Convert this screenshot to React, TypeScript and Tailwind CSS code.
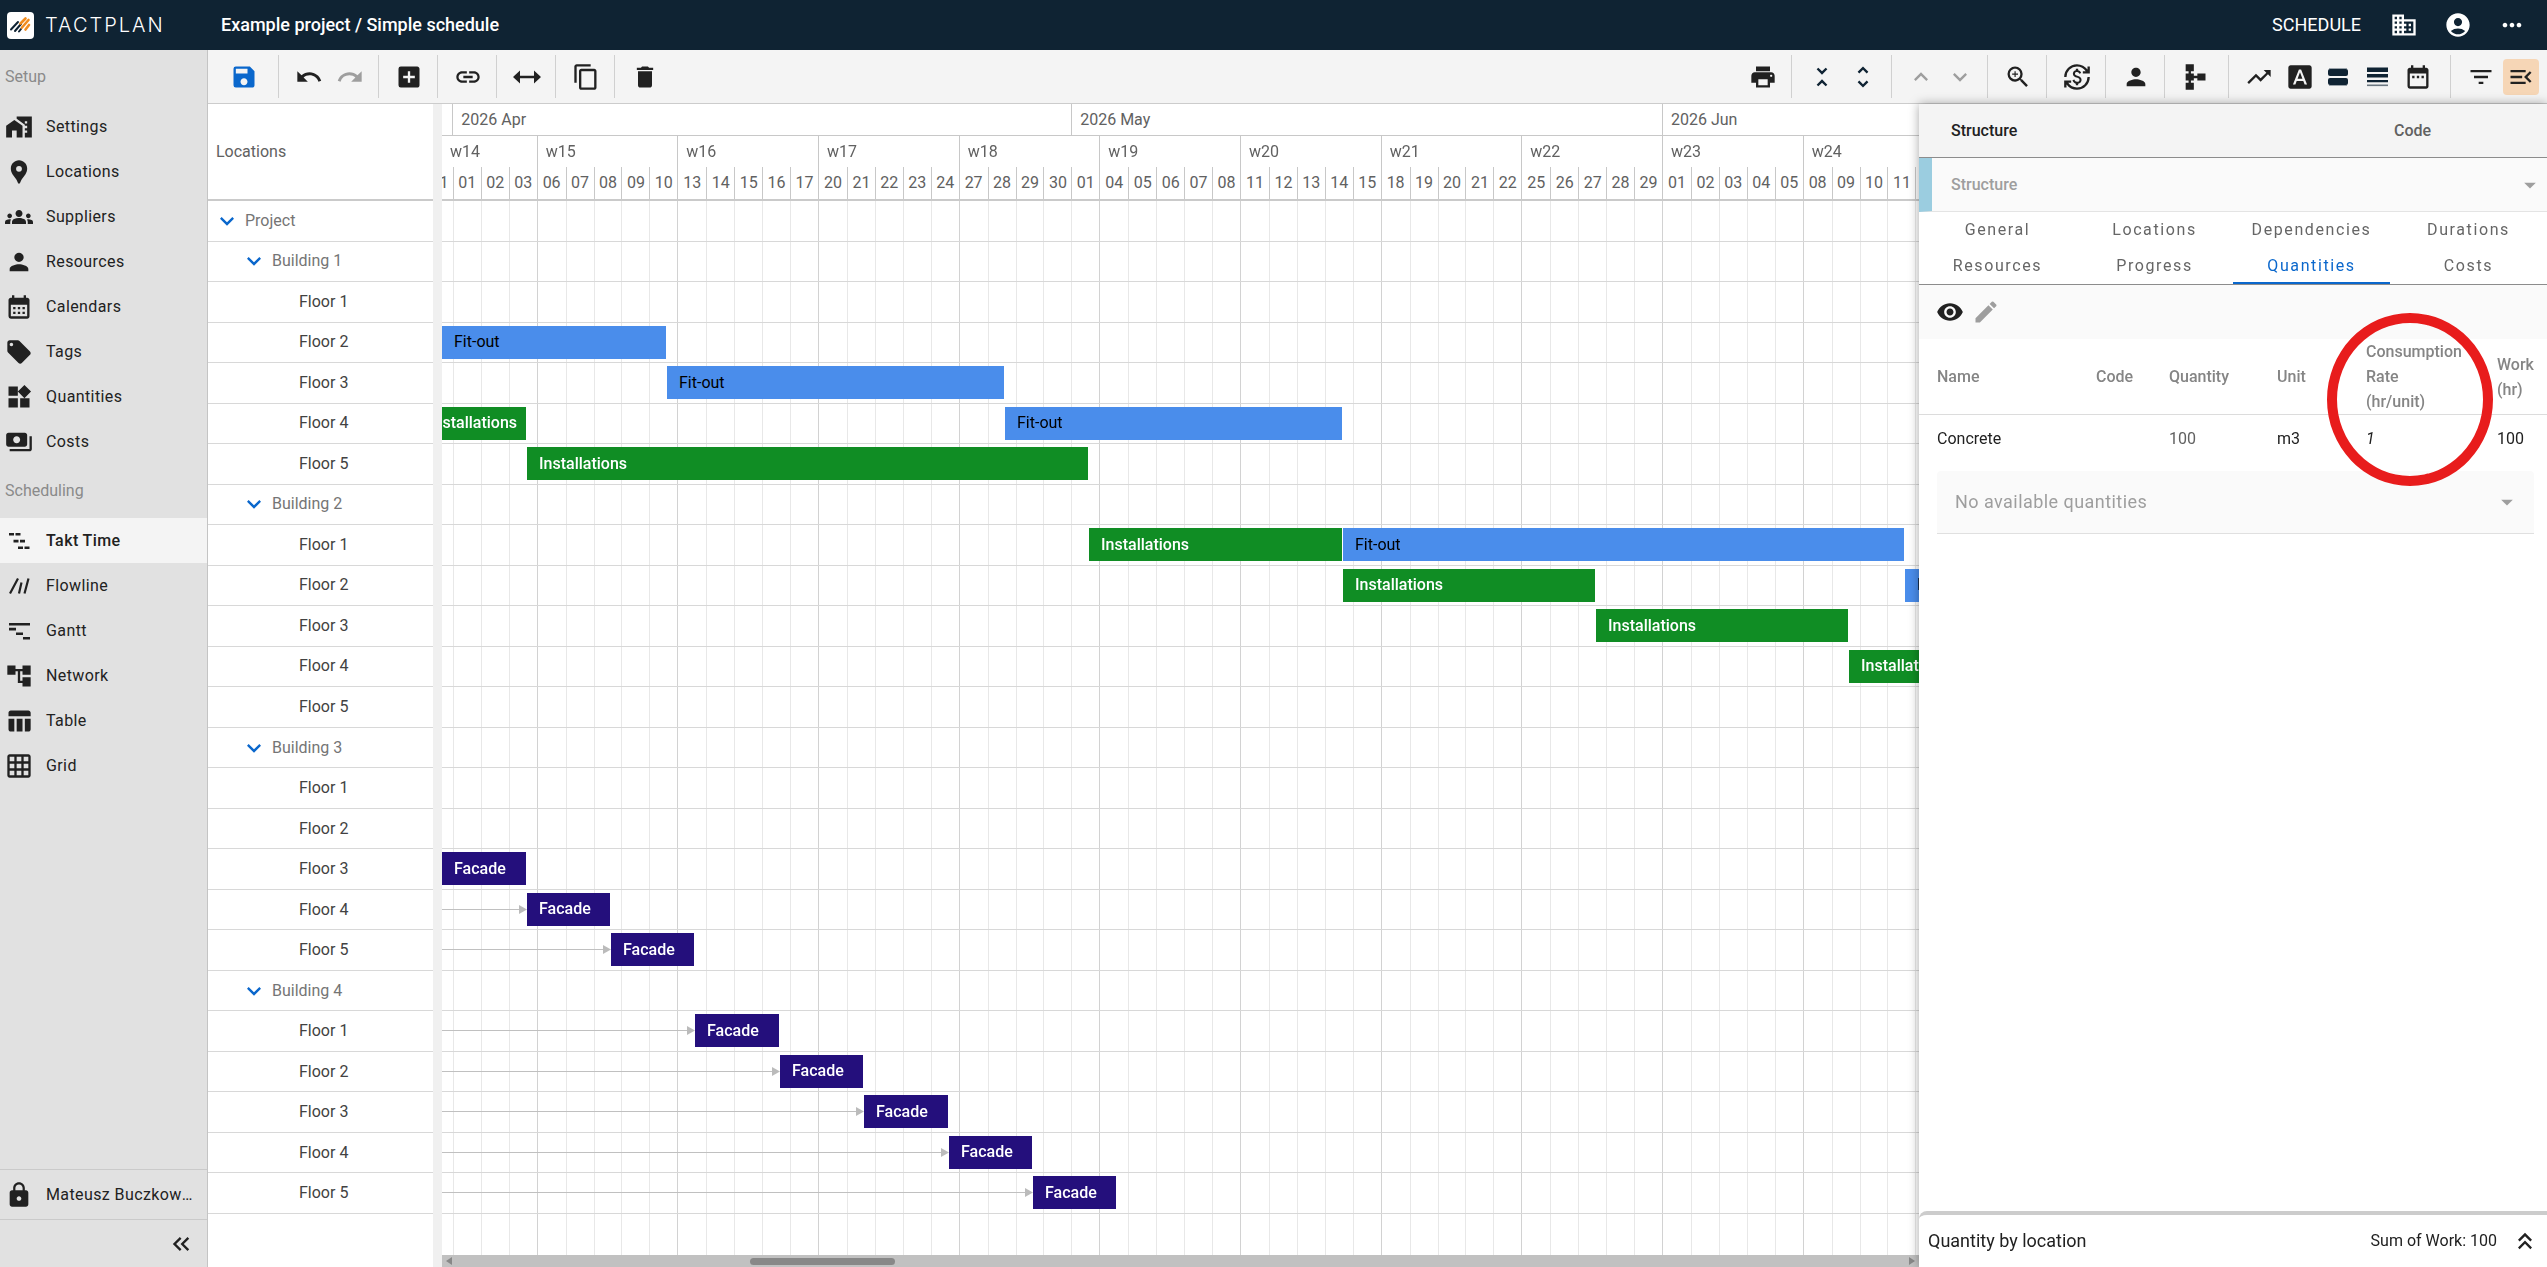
import React, { useLayoutEffect, useRef, useState } from "react";
import {
    MdAccountCircle,
    MdAccountTree,
    MdAddBox,
    MdArrowDropDown,
    MdBusiness,
    MdCalendarMonth,
    MdContentCopy,
    MdCurrencyExchange,
    MdDateRange,
    MdDelete,
    MdEdit,
    MdExpandLess,
    MdExpandMore,
    MdFilterList,
    MdFontDownload,
    MdGridOn,
    MdGroups,
    MdHomeWork,
    MdKeyboardDoubleArrowLeft,
    MdKeyboardDoubleArrowUp,
    MdLink,
    MdLocalOffer,
    MdLocationPin,
    MdLock,
    MdMenuOpen,
    MdMoreHoriz,
    MdPayments,
    MdPerson,
    MdPrint,
    MdRedo,
    MdSave,
    MdSchema,
    MdTableChart,
    MdTrendingUp,
    MdUndo,
    MdUnfoldLess,
    MdUnfoldMore,
    MdVisibility,
    MdWidgets,
    MdZoomIn,
} from "react-icons/md";

type Icon = React.ComponentType<{ className?: string }>;

/* ---------- custom icons ---------- */

const TaktIcon: Icon = ({ className }) => (
    <svg className={className} viewBox="0 0 28 28" fill="currentColor">
        <path d="M4 6h5v2.6H4zM10.5 6h5v2.6h-5zM8.5 12.8h5v2.6h-5zM15 12.8h5v2.6h-5zM13 19.4h5V22h-5zM19.5 19.4h5V22h-5z" />
    </svg>
);

const FlowlineIcon: Icon = ({ className }) => (
    <svg className={className} viewBox="0 0 28 28" fill="none" stroke="currentColor" strokeWidth="2.2">
        <path d="M5 21.5L13 6.5M14 21.5L16.5 10.5M19.5 21.5L23.5 6.5" />
    </svg>
);

const GanttIcon: Icon = ({ className }) => (
    <svg className={className} viewBox="0 0 28 28" fill="currentColor">
        <path d="M4 6h21v2.6H4zM4 10.8h7v2.6H4zM11 15.4h7V18h-7zM18 20h7v2.6h-7z" />
    </svg>
);

const StretchIcon: Icon = ({ className }) => (
    <svg className={className} viewBox="0 0 28 28" fill="currentColor">
        <path d="M0 14l7-6.5v5.2h14V7.5l7 6.5-7 6.5v-5.2H7v5.2z" />
    </svg>
);

const SplitRowsIcon: Icon = ({ className }) => (
    <svg className={className} viewBox="0 0 28 28">
        <path d="M5 5.5h18M5 22.500h18" stroke="#9aa3aa" />
        <rect x="4" y="6" width="20" height="7" rx="2" fill="#0f2333" />
        <rect x="4" y="15" width="20" height="7" rx="2" fill="#0f2333" />
    </svg>
);

const RowWeightIcon: Icon = ({ className }) => (
    <svg className={className} viewBox="0 0 28 28" fill="#0f2333">
        <path d="M4 4.5h21V9H4zM4 11h21v3.4H4zM4 17h21v2.2H4z" />
        <path d="M4 21.500h21v1.6H4z" opacity="0.6" />
    </svg>
);

const Logo = () => (
    <svg className="size-[27px]" viewBox="0 0 27 27" fill="none" strokeLinecap="round" strokeWidth="2">
        <rect width="27" height="27" rx="4" fill="#fff" />
        <path d="M4 17.5l7-7.500M8 19l6-7M12 19.500l2-2.500" stroke="#0f2333" />
        <path d="M13.500 11.500l5-5M15 15.500l6.500-7.500M18.500 17.500l3.500-4.500" stroke="#f08c1e" strokeWidth="2.600" />
    </svg>
);

/* ---------- data ---------- */

const setupItems: [string, Icon][] = [
    ["Settings", MdHomeWork],
    ["Locations", MdLocationPin],
    ["Suppliers", MdGroups],
    ["Resources", MdPerson],
    ["Calendars", MdCalendarMonth],
    ["Tags", MdLocalOffer],
    ["Quantities", MdWidgets],
    ["Costs", MdPayments],
];

const schedulingItems: [string, Icon][] = [
    ["Takt Time", TaktIcon],
    ["Flowline", FlowlineIcon],
    ["Gantt", GanttIcon],
    ["Network", MdAccountTree],
    ["Table", MdTableChart],
    ["Grid", MdGridOn],
];

const accountItems: [string, Icon][] = [
    ["Company", MdBusiness],
    ["Account", MdAccountCircle],
    ["More", MdMoreHoriz],
];

type Kind = "fitout" | "install" | "facade";

interface Bar {
    kind: Kind;
    start: number; // working days since the first visible Monday
    end: number;
    linked?: boolean;
}

interface Row {
    label: string;
    level: 0 | 1 | 2;
    bars: Bar[];
}

const barStyles: Record<Kind, { label: string; className: string }> = {
    fitout: { label: "Fit-out", className: "bg-[#4a8deb] text-black" },
    install: { label: "Installations", className: "bg-[#108d24] font-medium text-white" },
    facade: { label: "Facade", className: "bg-[#240f7c] font-medium text-white" },
};

const building = (n: number, floors: Bar[][]): Row[] => [
    { label: `Building ${n}`, level: 1, bars: [] },
    ...floors.map((bars, i): Row => ({ label: `Floor ${i + 1}`, level: 2, bars })),
];

const facade = (start: number): Bar[] => [{ kind: "facade", start, end: start + 3, linked: true }];

const rows: Row[] = [
    { label: "Project", level: 0, bars: [] },
    ...building(1, [
        [],
        [{ kind: "fitout", start: 2, end: 10 }],
        [{ kind: "fitout", start: 10, end: 22 }],
        [{ kind: "install", start: 1.1, end: 5 }, { kind: "fitout", start: 22, end: 34 }],
        [{ kind: "install", start: 5, end: 25 }],
    ]),
    ...building(2, [
        [{ kind: "install", start: 25, end: 34 }, { kind: "fitout", start: 34, end: 54 }],
        [{ kind: "install", start: 34, end: 43 }, { kind: "fitout", start: 54, end: 60 }],
        [{ kind: "install", start: 43, end: 52 }],
        [{ kind: "install", start: 52, end: 60 }],
        [],
    ]),
    ...building(3, [[], [], facade(2), facade(5), facade(8)]),
    ...building(4, [facade(11), facade(14), facade(17), facade(20), facade(23)]),
];

const WEEKS = 12;
const CANVAS_WIDTH = 1688;
const DAY_WIDTH = CANVAS_WIDTH / (WEEKS * 5);
const BAR_SHIFT = -10;

const weeks = Array.from({ length: WEEKS }, (_, w) => ({
    label: `w${14 + w}`,
    days: Array.from({ length: 5 }, (_, d) => {
        const date = new Date(Date.UTC(2026, 2, 30 + w * 7 + d));
        return String(date.getUTCDate()).padStart(2, "0");
    }),
}));

const months = [
    { label: "", days: 2 },
    { label: "2026 Apr", days: 22 },
    { label: "2026 May", days: 21 },
    { label: "2026 Jun", days: 15 },
];

const tabs = ["General", "Locations", "Dependencies", "Durations", "Resources", "Progress", "Quantities", "Costs"];

/* ---------- parts ---------- */

function Header() {
    return (
        <header className="flex h-[50px] shrink-0 items-center bg-[#0f2333] text-lg text-white">
            <a href="#home" className="flex w-[221px] items-center gap-[11px] pl-[7px]">
                <Logo />
                <span className="font-['Inter'] text-xl font-light tracking-widest">TACTPLAN</span>
            </a>
            <h1 className="flex-1 font-medium">Example project / Simple schedule</h1>
            <a href="#schedule" className="mr-4">SCHEDULE</a>
            <div className="flex pr-2">
                {accountItems.map(([name, Ico]) => (
                    <button key={name} type="button" aria-label={name} className="flex w-[54px] justify-center">
                        <Ico className="size-7" />
                    </button>
                ))}
            </div>
        </header>
    );
}

function NavList({ title, items, active }: { title: string; items: [string, Icon][]; active?: string }) {
    return (
        <section>
            <h2 className="flex h-[54px] items-center pl-[5px] text-[#8a8a8a]">{title}</h2>
            {items.map(([name, Ico]) => (
                <a
                    key={name}
                    href={`#${name}`}
                    className={`flex h-[45px] items-center gap-[13px] pl-[5px] tracking-wide ${name === active ? "bg-[#f4f4f4] font-medium" : ""}`}
                >
                    <Ico className="size-7 text-[#212121]" />
                    {name}
                </a>
            ))}
        </section>
    );
}

function Sidebar() {
    return (
        <nav className="flex w-52 shrink-0 flex-col border-r border-[#c4c4c4] bg-[#e1e1e1] text-[#212121]">
            <NavList title="Setup" items={setupItems} />
            <NavList title="Scheduling" items={schedulingItems} active="Takt Time" />
            <div className="mt-auto flex h-[50px] items-center gap-[13px] border-t border-[#cacaca] pr-3 pl-[5px] tracking-wide">
                <MdLock className="size-7 shrink-0" />
                <span className="truncate">Mateusz Buczkowski</span>
            </div>
            <div className="flex h-12 items-center justify-end border-t border-[#cacaca] pr-3">
                <button type="button" aria-label="Collapse menu">
                    <MdKeyboardDoubleArrowLeft className="size-7" />
                </button>
            </div>
        </nav>
    );
}

function Tool({ name, icon: Ico, className = "w-[41px]" }: { name: string; icon: Icon; className?: string }) {
    return (
        <button type="button" aria-label={name} className={`flex items-center justify-center ${className}`}>
            <Ico className="size-7" />
        </button>
    );
}

function ToolGroup({ children, className = "" }: { children: React.ReactNode; className?: string }) {
    return <div className={`flex h-[43px] border-r border-[#d0d0d0] pr-2 pl-[9px] ${className}`}>{children}</div>;
}

function Toolbar() {
    return (
        <div className="flex h-[54px] shrink-0 items-center border-b border-[#cccccc] bg-[#f4f4f4] pr-1.5 text-[#212121]">
            <ToolGroup className="w-[71px]">
                <Tool name="Save" icon={MdSave} className="w-[54px] text-[#0a67cc]" />
            </ToolGroup>
            <ToolGroup>
                <Tool name="Undo" icon={MdUndo} />
                <Tool name="Redo" icon={MdRedo} className="w-[41px] text-[#9e9e9e]" />
            </ToolGroup>
            <ToolGroup><Tool name="Add" icon={MdAddBox} /></ToolGroup>
            <ToolGroup><Tool name="Link" icon={MdLink} /></ToolGroup>
            <ToolGroup><Tool name="Stretch" icon={StretchIcon} /></ToolGroup>
            <ToolGroup><Tool name="Copy" icon={MdContentCopy} /></ToolGroup>
            <div className="pl-[9px]"><Tool name="Delete" icon={MdDelete} /></div>
            <ToolGroup className="ml-auto"><Tool name="Print" icon={MdPrint} /></ToolGroup>
            <ToolGroup className="text-[#0f2333]">
                <Tool name="Collapse rows" icon={MdUnfoldLess} />
                <Tool name="Expand rows" icon={MdUnfoldMore} />
            </ToolGroup>
            <ToolGroup className="w-24 text-[#9e9e9e]">
                <Tool name="Previous" icon={MdExpandLess} />
                <Tool name="Next" icon={MdExpandMore} />
            </ToolGroup>
            <ToolGroup><Tool name="Zoom" icon={MdZoomIn} /></ToolGroup>
            <ToolGroup><Tool name="Cost flow" icon={MdCurrencyExchange} /></ToolGroup>
            <ToolGroup><Tool name="Resource" icon={MdPerson} /></ToolGroup>
            <ToolGroup className="w-16"><Tool name="Dependencies" icon={MdSchema} /></ToolGroup>
            <ToolGroup className="w-[222px]">
                <Tool name="Progress line" icon={MdTrendingUp} />
                <Tool name="Labels" icon={MdFontDownload} />
                <Tool name="Split rows" icon={SplitRowsIcon} className="w-9" />
                <Tool name="Row height" icon={RowWeightIcon} />
                <Tool name="Date range" icon={MdDateRange} />
            </ToolGroup>
            <div className="flex items-center gap-0.5 pl-[9px]">
                <Tool name="Filter" icon={MdFilterList} />
                <Tool name="Details" icon={MdMenuOpen} className="mr-0.5 h-9 w-9 rounded bg-[#f6d6b6]" />
            </div>
        </div>
    );
}

function LocationTree() {
    return (
        <div className="flex w-[225px] shrink-0 flex-col">
            <div className="flex h-[97px] items-center border-b-2 border-[#cacaca] pl-2 text-[#616161]">Locations</div>
            <div className="grid h-[1013px] auto-rows-fr">
                {rows.map((row, i) => (
                    <div key={i} className="flex items-center border-b border-[#d8d8d8]">
                        {row.level === 2 ? (
                            <span className="pl-[91px] text-[#424242]">{row.label}</span>
                        ) : (
                            <button type="button" className={`flex items-center gap-1 text-[#757575] ${row.level ? "pl-8" : "pl-[5px]"}`}>
                                <MdExpandMore className="size-7 text-[#0a67cc]" />
                                {row.label}
                            </button>
                        )}
                    </div>
                ))}
            </div>
        </div>
    );
}

function TaskBar({ bar }: { bar: Bar }) {
    const { label, className } = barStyles[bar.kind];
    const left = Math.round(bar.start * DAY_WIDTH + BAR_SHIFT);
    const right = Math.round(bar.end * DAY_WIDTH + BAR_SHIFT);
    return (
        <>
            {bar.linked && (
                <div className="absolute top-[15px] left-0 flex items-center" style={{ width: left }}>
                    <span className="h-px flex-1 bg-[#c0c0c0]" />
                    <svg className="h-[9px] w-2" viewBox="0 0 8 9" fill="#bbbbbb">
                        <path d="M0 0l8 4.5L0 9z" />
                    </svg>
                </div>
            )}
            <div
                className={`absolute top-[3px] flex h-[33px] items-center overflow-hidden pl-3 whitespace-nowrap ${className}`}
                style={{ left, width: right - left - 1 }}
            >
                {label}
            </div>
        </>
    );
}

function Timeline() {
    const scroller = useRef<HTMLDivElement>(null);

    // Open the view part way into week 14
    useLayoutEffect(() => {
        if (scroller.current) scroller.current.scrollLeft = 46;
    }, []);

    return (
        <div className="flex min-w-0 flex-1 flex-col">
            <div ref={scroller} className="flex-1 overflow-hidden">
                <div className="flex h-full flex-col" style={{ width: CANVAS_WIDTH }}>
                    <div className="flex h-[97px] shrink-0 flex-col border-b-2 border-[#cacaca] text-[#616161]">
                        <div className="flex h-8 border-b border-[#c8c8c8]">
                            {months.map((m) => (
                                <div
                                    key={m.label}
                                    className="flex shrink-0 items-center border-l border-[#c8c8c8] pl-2"
                                    style={{ width: m.days * DAY_WIDTH }}
                                >
                                    {m.label}
                                </div>
                            ))}
                        </div>
                        <div className="grid flex-1 grid-cols-12">
                            {weeks.map((w) => (
                                <div key={w.label} className="flex flex-col border-l border-[#c8c8c8]">
                                    <div className="flex h-[31px] items-center">
                                        <span className="sticky left-0 px-2">{w.label}</span>
                                    </div>
                                    <div className="grid flex-1 grid-cols-5">
                                        {w.days.map((d, i) => (
                                            <span
                                                key={d}
                                                className={`flex items-center justify-center ${i ? "border-l border-[#c8c8c8]" : ""}`}
                                            >
                                                {d}
                                            </span>
                                        ))}
                                    </div>
                                </div>
                            ))}
                        </div>
                    </div>
                    <div className="grid flex-1">
                        <div className="col-start-1 row-start-1 grid grid-cols-12">
                            {weeks.map((w) => (
                                <div key={w.label} className="grid grid-cols-5 border-l border-[#d2d2d2]">
                                    {w.days.map((d, i) => (
                                        <span key={d} className={i ? "border-l border-[#e8e8e8]" : ""} />
                                    ))}
                                </div>
                            ))}
                        </div>
                        <div className="col-start-1 row-start-1 grid h-[1013px] auto-rows-fr">
                            {rows.map((row, i) => (
                                <div key={i} className="relative border-b border-[#d8d8d8]">
                                    {row.bars.map((bar) => (
                                        <TaskBar key={bar.start} bar={bar} />
                                    ))}
                                </div>
                            ))}
                        </div>
                    </div>
                </div>
            </div>
            <div className="flex h-3 shrink-0 items-center justify-between bg-[#c1c1c1] px-1 text-[#888888]">
                <svg className="h-2 w-1.5" viewBox="0 0 6 8" fill="currentColor"><path d="M6 0v8L0 4z" /></svg>
                <div className="flex flex-1">
                    <span className="w-[298px]" />
                    <span className="h-[7px] w-[145px] rounded-full bg-[#888888]" />
                </div>
                <svg className="h-2 w-1.5" viewBox="0 0 6 8" fill="currentColor"><path d="M0 0v8l6-4z" /></svg>
            </div>
        </div>
    );
}

function DetailsPanel() {
    const [tab, setTab] = useState("Quantities");

    return (
        <aside className="relative z-10 flex w-[628px] shrink-0 flex-col bg-white text-[#212121] shadow-[0_0_10px_rgba(0,0,0,0.35)]">
            <div className="flex h-[54px] shrink-0 items-center border-b border-[#8c8c8c] bg-[#f4f4f4] pl-8 font-medium">
                <span className="w-[443px]">Structure</span>
                <span className="text-[#616161]">Code</span>
            </div>
            <label className="flex h-[54px] shrink-0 items-center border-b border-l-[13px] border-b-[#e4e4e4] border-l-[#9bcde0] bg-[#fafafa] pr-[3px] text-[#9e9e9e]">
                <select aria-label="Task" disabled className="flex-1 appearance-none pl-[19px] font-medium opacity-100">
                    <option>Structure</option>
                </select>
                <MdArrowDropDown className="size-7" />
            </label>
            <div role="tablist" className="grid shrink-0 grid-cols-4 border-b border-[#8c8c8c] text-[#666666]">
                {tabs.map((t) => (
                    <button
                        key={t}
                        type="button"
                        role="tab"
                        aria-selected={t === tab}
                        onClick={() => setTab(t)}
                        className={`h-9 border-b-2 pt-0.5 tracking-widest ${t === tab ? "border-[#0a67cc] text-[#0a67cc]" : "border-transparent"}`}
                    >
                        {t}
                    </button>
                ))}
            </div>
            <div className="flex h-[54px] shrink-0 items-center gap-2 bg-[#fafafa] pl-[17px]">
                <button type="button" aria-label="View"><MdVisibility className="size-7" /></button>
                <button type="button" aria-label="Edit"><MdEdit className="size-7 text-[#9e9e9e]" /></button>
            </div>
            <table className="w-full table-fixed text-left">
                <thead>
                    <tr className="h-[75px] border-b border-[#dcdcdc] leading-[25px] text-[#858585]">
                        <th className="w-[177px] pl-[18px] font-medium">Name</th>
                        <th className="w-[73px] font-medium">Code</th>
                        <th className="w-[108px] font-medium">Quantity</th>
                        <th className="w-[89px] font-medium">Unit</th>
                        <th className="w-[131px] font-medium">
                            Consumption
                            <br />
                            Rate
                            <br />
                            (hr/unit)
                        </th>
                        <th className="pr-3 font-medium">Work (hr)</th>
                    </tr>
                </thead>
                <tbody>
                    <tr className="h-12">
                        <td className="pl-[18px]">Concrete</td>
                        <td />
                        <td className="text-[#616161]">100</td>
                        <td>m3</td>
                        <td className="italic">1</td>
                        <td>100</td>
                    </tr>
                </tbody>
            </table>
            <label className="mt-2 mr-[13px] ml-[18px] flex h-[63px] items-center rounded-t border-b border-[#e0e0e0] bg-[#fafafa] pr-[13px] text-lg text-[#9e9e9e]">
                <select aria-label="Add quantity" disabled className="flex-1 appearance-none pl-[18px] tracking-wide opacity-100">
                    <option>No available quantities</option>
                </select>
                <MdArrowDropDown className="size-7" />
            </label>

            {/* Highlight round the consumption rate */}
            <div className="pointer-events-none absolute top-[209px] left-[408px] h-[173px] w-[166px] rounded-[50%] border-[10px] border-[#e81c1c]" />

            <div className="mt-auto flex h-14 shrink-0 items-center rounded-tl-lg border-t-4 border-[#cccccc] pr-2 pl-[9px]">
                <span className="flex-1 text-lg">Quantity by location</span>
                <span>Sum of Work: 100</span>
                <button type="button" aria-label="Expand" className="ml-3.5">
                    <MdKeyboardDoubleArrowUp className="size-7" />
                </button>
            </div>
        </aside>
    );
}

export default function App() {
    return (
        <div className="flex h-screen flex-col overflow-hidden bg-white font-['Roboto',sans-serif] text-base">
            <Header />
            <div className="flex min-h-0 flex-1">
                <Sidebar />
                <main className="flex min-w-0 flex-1 flex-col">
                    <Toolbar />
                    <div className="flex min-h-0 flex-1">
                        <LocationTree />
                        <div className="w-[9px] shrink-0 bg-[#f0f0f0]" />
                        <Timeline />
                        <DetailsPanel />
                    </div>
                </main>
            </div>
        </div>
    );
}
